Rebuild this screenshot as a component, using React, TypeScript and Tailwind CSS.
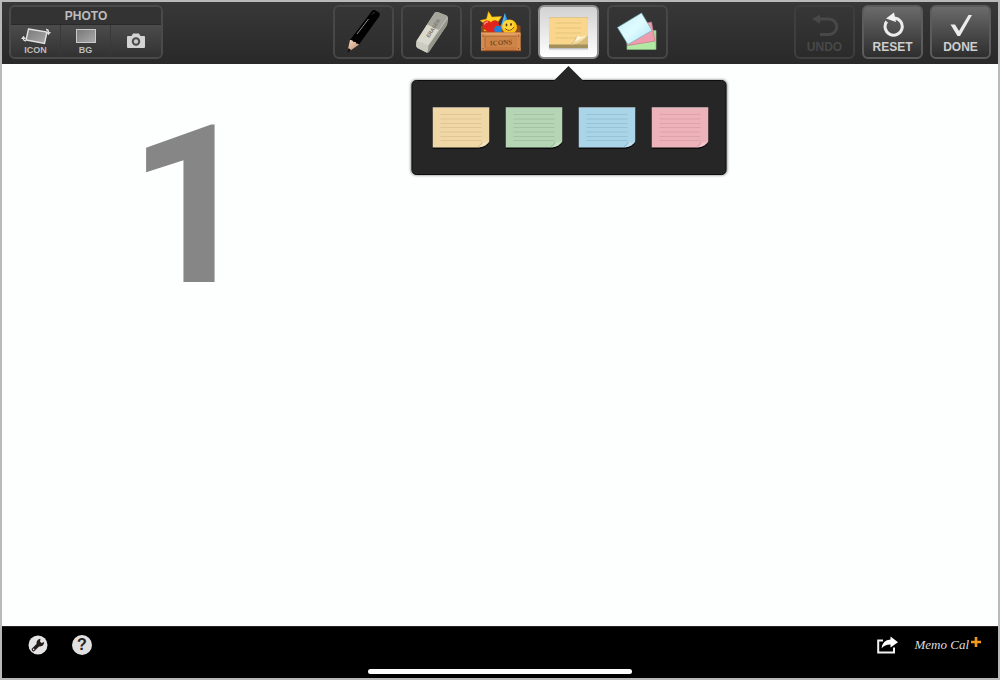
import React, { useState } from 'react';
import clsx from 'clsx';

const NOTE_COLORS = [
  { name: 'Yellow', fill: '#efd7a6', fold: '#f3e6cb', shade: '#c9ad78' },
  { name: 'Green', fill: '#b5d5b4', fold: '#cfe5cf', shade: '#86ab88' },
  { name: 'Blue', fill: '#aad4e7', fold: '#cae5f1', shade: '#7ba7bf' },
  { name: 'Pink', fill: '#edb3bb', fold: '#f6d0d5', shade: '#c98a94' },
];

function PencilIcon() {
  return (
    <svg viewBox="0 0 57 50" className="w-[57px] h-[50px]" aria-hidden="true">
      <defs>
        <linearGradient id="wood" x1="0" y1="0" x2="1" y2="1">
          <stop offset="0" stopColor="#f6d9c0" />
          <stop offset="1" stopColor="#c08a6c" />
        </linearGradient>
      </defs>
      <path d="M36.500 4.500 Q38 2.500 40 3.200 L44 5.500 Q45.500 7 44.500 9 L24 37.500 L15 33 Z" fill="#000" />
      <path d="M15 33 Q17.500 32.500 18.500 35 Q21 34 21.500 37 Q23 36.500 24 37.500 L15.500 43.500 L13 42 Z" fill="url(#wood)" />
      <path d="M13.500 41 L16 43 L12.500 46 Z" fill="#111" />
      <path d="M22 27 L33.500 12" stroke="#8b8b8b" strokeWidth="1" />
      <path d="M37 7.500 L39.500 5" stroke="#444" strokeWidth="1" />
    </svg>
  );
}

function EraserIcon() {
  return (
    <svg viewBox="0 0 57 50" className="w-[57px] h-[50px]" aria-hidden="true">
      <path d="M31.500 6 Q32.500 4.500 34.500 5 L43.500 8.500 Q45.200 9.500 45 11.500 L44 18 L26.500 44 Q25.500 46 23.500 45.500 L14.500 41 Q13 40 13.200 38 L13.500 34 Z" fill="#c4c4b9" />
      <path d="M31.500 6 Q32.500 4.500 34.500 5 L43.500 8.500 Q45 9.500 43.500 11.500 L35.500 23 L24 17.500 Z" fill="#a5a59b" />
      <path d="M24 17.500 L35.500 23 L25.500 38.500 L13.500 34 Z" fill="#d9d9ce" />
      <path d="M13.500 34 L25.500 38.500 L24.500 45.500 Q24 45.700 23.500 45.500 L14.500 41 Q13 40 13.200 38 Z" fill="#cbcbc0" />
      <path d="M25.500 38.500 L45 11 L44 18 L26.500 44 Q25.500 45.500 24.500 45.500 Z" fill="#95958b" />
      <text
        x="26"
        y="31"
        transform="rotate(-57 26 31)"
        fontFamily="Liberation Sans"
        fontWeight="bold"
        fontSize="5"
        fill="#77776e"
      >
        ERASER
      </text>
    </svg>
  );
}

function CrateIcon() {
  return (
    <svg viewBox="0 0 57 50" className="w-[57px] h-[50px]" aria-hidden="true">
      <path d="M9 19 L12 18 L46 18 L48.500 19 L48.500 26 L9 26 Z" fill="#8a4a20" />
      <path d="M33 6 L38.500 22 L28 22 Z" fill="#2b8fe0" />
      <path d="M33 6 L34 22 L28 22 Z" fill="#55b3f3" />
      <path d="M16.500 4.500 L20 10 L29.500 9.500 L25 16.500 L28 24 L12 24 L13 17 L8 13.500 L14.500 12 Z" fill="#ffd424" stroke="#e09a10" strokeWidth="0.500" />
      <path d="M19 15.500 C21 12 27 12.500 27 17.500 C27 21 24 24 21 26.500 C15 25 10.500 22 10.500 18 C10.500 13 17 12 19 15.500 Z" fill="#e0251b" />
      <path d="M12.500 17 Q13 15 15.500 15" stroke="#ff8d7c" strokeWidth="1.500" fill="none" strokeLinecap="round" />
      <circle cx="26" cy="22.500" r="3.800" fill="#1f7ddb" />
      <circle cx="37.500" cy="20" r="7.500" fill="#fdbf12" />
      <circle cx="36.500" cy="18.500" r="5.500" fill="#ffd63b" />
      <ellipse cx="34.500" cy="18" rx="0.900" ry="1.400" fill="#5e3508" />
      <ellipse cx="39" cy="17.500" rx="0.900" ry="1.400" fill="#5e3508" />
      <path d="M33 21.500 Q38 26 42 20" stroke="#8a4c0a" strokeWidth="1" fill="none" />
      <rect x="9" y="25.500" width="39.500" height="18" fill="#b96b34" />
      <rect x="9" y="25.500" width="39.500" height="3.500" fill="#e3a063" />
      <rect x="9" y="40.500" width="39.500" height="3.500" fill="#c97c41" />
      <rect x="9" y="27" width="4" height="17" fill="#d68b4e" />
      <rect x="44.500" y="27" width="4" height="17" fill="#d68b4e" />
      <rect x="13" y="29" width="31.500" height="11.500" fill="#cd8548" />
      <path d="M13 40.500 V29 H44.500" stroke="#9c5a2b" strokeWidth="0.700" fill="none" />
      <path d="M9 44 H48.500" stroke="#6f3711" strokeWidth="1" />
      <circle cx="11" cy="29" r="0.600" fill="#6b3511" />
      <circle cx="46.500" cy="29" r="0.600" fill="#6b3511" />
      <circle cx="11" cy="41.500" r="0.600" fill="#6b3511" />
      <circle cx="46.500" cy="41.500" r="0.600" fill="#6b3511" />
      <text
        x="18"
        y="38"
        transform="rotate(-3 28 36)"
        fontFamily="Liberation Serif"
        fontWeight="bold"
        fontSize="7"
        fill="#7b4721"
      >
        ICONS
      </text>
    </svg>
  );
}

function StickyIcon() {
  return (
    <svg viewBox="0 0 57 50" className="w-[57px] h-[50px]" aria-hidden="true">
      <rect x="9" y="38" width="39" height="4.500" rx="1" fill="#8d8d8d" opacity="0.500" />
      <rect x="9" y="10.500" width="39" height="30.500" rx="1" fill="#a3905c" />
      <path d="M10.500 10.500 H46.500 Q48 10.500 48 12 V28 Q42 36.500 31 37.500 H9 V12 Q9 10.500 10.500 10.500 Z" fill="#f9d68b" />
      <path d="M15.500 16 H41 M15.500 21 H41 M15.500 26 H41 M15.500 31 H35" stroke="#e6c47c" strokeWidth="1" />
      <path d="M31 37.500 Q36 34.500 36.500 28.500 Q40 31 48 28 L48 37.500 Z" fill="#d9bb78" />
      <path d="M31 37.500 Q36 34.500 36.500 28.500 Q40 31 48 28 Q41 37 31 37.500 Z" fill="#eed9a4" />
      <path d="M36.500 28.500 Q40 31 48 28 Q40 33 33.500 35 Q36.500 32 36.500 28.500 Z" fill="#fff3d0" />
      <path d="M31 37 Q36 34 36.500 28.500" stroke="#d3b269" strokeWidth="0.700" fill="none" />
    </svg>
  );
}

function CardsIcon() {
  return (
    <svg viewBox="0 0 57 50" className="w-[57px] h-[50px]" aria-hidden="true">
      <defs>
        <linearGradient id="sky" x1="0" y1="0" x2="1" y2="1">
          <stop offset="0" stopColor="#c9f1fa" />
          <stop offset="0.500" stopColor="#dffbff" />
          <stop offset="1" stopColor="#a8e2f1" />
        </linearGradient>
      </defs>
      <path d="M18 23.500 H47 V42.500 H18 Z" fill="#b0e8a4" stroke="#83b97b" strokeWidth="0.700" />
      <path d="M38 16 L42.500 15 L46 34 L18.500 38.500 L16 26 Z" fill="#ef9dae" stroke="#c67486" strokeWidth="0.700" />
      <path d="M32.500 6 L43 23.500 L19 37.500 L8.500 20.500 Z" fill="url(#sky)" stroke="#79aab7" strokeWidth="0.700" />
    </svg>
  );
}

function RotatePhotoIcon() {
  return (
    <svg viewBox="0 0 30 18" className="w-[30px] h-[18px]" aria-hidden="true">
      <defs>
        <linearGradient id="print" x1="0" y1="0" x2="1" y2="1">
          <stop offset="0" stopColor="#777" />
          <stop offset="1" stopColor="#aaa" />
        </linearGradient>
      </defs>
      <path d="M7.500 2 L26 5 L23.500 16.500 L5 13 Z" fill="url(#print)" stroke="#e2e2e2" strokeWidth="1.400" />
      <path d="M2.500 10 V12.500 Q2.500 13.500 5 14" stroke="#ddd" strokeWidth="1.300" fill="none" />
      <path d="M2.500 8.800 L5 12 H0 Z" fill="#ddd" />
      <path d="M25 2.500 Q27.500 2.500 27.500 5" stroke="#ddd" strokeWidth="1.300" fill="none" />
      <path d="M27.500 8.200 L30 5 H25 Z" fill="#ddd" />
    </svg>
  );
}

function BackgroundIcon() {
  return (
    <svg viewBox="0 0 30 18" className="w-[30px] h-[18px]" aria-hidden="true">
      <rect x="5.500" y="2.500" width="19" height="13" fill="url(#print)" stroke="#c9c9c9" strokeWidth="1" />
    </svg>
  );
}

function CameraIcon() {
  return (
    <svg viewBox="0 0 20 18" className="w-[20px] h-[18px]" aria-hidden="true">
      <path
        d="M2 4 H5.500 L7 1.500 H13 L14.500 4 H18 Q19 4 19 5 V15 Q19 16 18 16 H2 Q1 16 1 15 V5 Q1 4 2 4 Z"
        fill="#d3d3d3"
      />
      <circle cx="10" cy="9.500" r="4.200" fill="#4a4a4a" />
      <circle cx="10" cy="9.500" r="2.200" fill="#c9c9c9" />
    </svg>
  );
}

function UndoIcon() {
  return (
    <svg viewBox="0 0 28 26" className="w-[28px] h-[26px]" aria-hidden="true">
      <path d="M8 8 H18 A7.700 7.700 0 0 1 18 23.500 H9" stroke="currentColor" strokeWidth="3" fill="none" />
      <path d="M1 8 L9 3.500 V12.500 Z" fill="currentColor" />
    </svg>
  );
}

function ResetIcon() {
  return (
    <svg viewBox="0 0 28 26" className="w-[28px] h-[26px]" aria-hidden="true">
      <path d="M7.700 10.500 A8.600 8.600 0 1 0 15.500 7" stroke="#ececec" strokeWidth="3" fill="none" />
      <path d="M7 7.500 L15 1.500 L17 11 Z" fill="#f2f2f2" />
    </svg>
  );
}

function CheckIcon() {
  return (
    <svg viewBox="0 0 28 26" className="w-[28px] h-[26px]" aria-hidden="true">
      <path d="M3.500 13.500 H8 L12 20 L21.500 4 H25 L13 25 H10.500 Z" fill="#ececec" />
    </svg>
  );
}

function WrenchIcon() {
  return (
    <svg viewBox="0 0 20 20" className="w-5 h-5" aria-hidden="true">
      <circle cx="10" cy="10" r="9.500" fill="#e4e4e4" />
      <path d="M5.500 14.500 L11 9" stroke="#241a18" strokeWidth="3.600" strokeLinecap="round" />
      <path
        d="M8.500 8 Q8.500 4.500 12.500 3.800 L12 6.500 L13.500 8 L16.200 7 Q16 11 12 11.500 Q9 11.500 8.500 8 Z"
        fill="#241a18"
      />
      <circle cx="5.600" cy="14.400" r="0.800" fill="#e4e4e4" />
    </svg>
  );
}

function ShareIcon() {
  return (
    <svg viewBox="0 0 21 18" className="w-[21px] h-[18px]" aria-hidden="true">
      <path d="M6 4.500 H1.200 V16.500 H17 V11.500" stroke="#f2f2f2" strokeWidth="2" fill="none" />
      <path d="M13.500 0.500 L21 6.200 L13.500 11.500 V8.500 Q7.500 8.500 4.500 12.500 Q5.500 4 13.500 3.500 Z" fill="#fff" />
    </svg>
  );
}

function NotePaper({ fill, fold, shade }: { fill: string; fold: string; shade: string }) {
  return (
    <svg viewBox="0 0 57 42" className="w-[57px] h-[42px]" aria-hidden="true">
      <path d="M0 6 H57 V35 Q54 41 46 42 H0 Z" fill="#0c0c0c" />
      <path d="M0 0.500 H57 V34 Q54 39.500 46 40.500 H0 Z" fill={fill} />
      <path d="M0 0.500 H57" stroke="#fff" strokeOpacity="0.300" />
      <path
        d="M8 7.500 H49 M8 12 H49 M8 16.500 H49 M8 20.500 H49 M8 25 H49 M8 29.500 H49 M8 33.500 H49"
        stroke={shade}
        strokeOpacity="0.400"
      />
      <path d="M46 40.500 Q49 39 50 35 Q53 36.500 57 34 Q54 39.500 46 40.500 Z" fill={fold} fillOpacity="0.700" />
      <path d="M45 40 Q48.500 38.500 50 35" stroke={shade} strokeOpacity="0.700" fill="none" />
    </svg>
  );
}

const TOOLS = [
  { id: 'pencil', label: 'Pencil', icon: PencilIcon },
  { id: 'eraser', label: 'Eraser', icon: EraserIcon },
  { id: 'icons', label: 'Icons', icon: CrateIcon },
  { id: 'notes', label: 'Sticky notes', icon: StickyIcon },
  { id: 'cards', label: 'Cards', icon: CardsIcon },
];

const ACTIONS = [
  { label: 'UNDO', icon: UndoIcon, disabled: true },
  { label: 'RESET', icon: ResetIcon, disabled: false },
  { label: 'DONE', icon: CheckIcon, disabled: false },
];

function NotePicker() {
  return (
    <div className="absolute top-[75px] left-1/2 -translate-x-1/2 z-10 w-[315px] rounded-[5px] bg-[#262626] border border-[#0d0d0d] shadow-[0_0_3px_rgba(0,0,0,0.6)] pt-[26px] pb-[25px] pl-5">
      <svg viewBox="0 0 30 15" className="absolute -top-[15px] left-1/2 -translate-x-1/2 w-[30px] h-[15px]" aria-hidden="true">
        <path d="M0 15 L15 0 L30 15 Z" fill="#262626" />
      </svg>
      <div className="flex gap-4">
        {NOTE_COLORS.map(({ name, ...colors }) => (
          <button key={name} type="button" aria-label={name + ' note'}>
            <NotePaper {...colors} />
          </button>
        ))}
      </div>
    </div>
  );
}

export default function App() {
  const [tool, setTool] = useState('notes');

  return (
    <div className="min-h-screen flex flex-col border-2 border-[#b9b9b9] bg-[#fdfefe] font-['Liberation_Sans',Arial,sans-serif]">
      <header className="grid grid-cols-[1fr_auto_1fr] items-start h-[62px] pt-[3px] pl-[7px] pr-[7px] bg-linear-to-b from-[#383838] to-[#292929]">
        <div className="w-[154px] h-[54px] flex flex-col rounded-md border-2 border-[#4a4a4a] overflow-hidden font-bold text-[#bdbdbd]">
          <h2 className="h-[18px] text-center text-xs leading-[18px] bg-[#333] border-b border-[#292929]">PHOTO</h2>
          <div className="flex-1 grid grid-cols-3 bg-linear-to-b from-[#4c4c4c] to-[#323232] text-[9px] leading-[10px]">
            <button type="button" className="flex flex-col items-center pt-[2px] border-r border-[#383838]">
              <RotatePhotoIcon />
              ICON
            </button>
            <button type="button" className="flex flex-col items-center pt-[2px] border-r border-[#383838]">
              <BackgroundIcon />
              BG
            </button>
            <button type="button" aria-label="Camera" className="flex items-center justify-center">
              <CameraIcon />
            </button>
          </div>
        </div>

        <nav className="flex justify-between w-[335px]">
          {TOOLS.map(({ id, label, icon: Icon }) => (
            <div key={id} className="relative">
              <button
                type="button"
                aria-label={label}
                onClick={() => setTool(id)}
                className={clsx(
                  'w-[61px] h-[54px] flex items-center justify-center rounded-md border-2',
                  tool === id
                    ? 'border-[#8f8f8f] bg-linear-to-b from-[#d2d2d2] to-[#ffffff]'
                    : 'border-[#474747] bg-linear-to-b from-[#363636] to-[#2d2d2d]'
                )}
              >
                <Icon />
              </button>
              {id === 'notes' && tool === 'notes' && <NotePicker />}
            </div>
          ))}
        </nav>

        <div className="flex gap-[7px] justify-end">
          {ACTIONS.map(({ label, icon: Icon, disabled }) => (
            <button
              key={label}
              type="button"
              disabled={disabled}
              className={clsx(
                'w-[61px] h-[54px] flex flex-col items-center pt-1 rounded-md border-2 text-xs leading-5 font-bold',
                disabled
                  ? 'border-[#3e3e3e] text-[#484848]'
                  : 'border-[#5c5c5c] text-[#cfcfcf] bg-linear-to-b from-[#6b6b6b] to-[#2e2e2e]'
              )}
            >
              <Icon />
              {label}
            </button>
          ))}
        </div>
      </header>

      <main className="flex-1 pt-[43px] pl-[126px]">
        <p className="font-['Roboto',sans-serif] text-[221px] leading-[200px] font-bold text-[#868686]">1</p>
      </main>

      <footer className="bg-black border-t border-[#222] pb-1">
        <div className="flex items-center justify-between h-9 pl-[26px] pr-[17px]">
          <div className="flex gap-6">
            <button type="button" aria-label="Settings">
              <WrenchIcon />
            </button>
            <button
              type="button"
              aria-label="Help"
              className="w-5 h-5 rounded-full bg-[#e0e0e0] text-[#222] text-base leading-5 font-bold"
            >
              ?
            </button>
          </div>
          <div className="flex items-center gap-4">
            <button type="button" aria-label="Share">
              <ShareIcon />
            </button>
            <a href="#about" className="flex items-start text-[#ddd]">
              <span className="font-['Liberation_Serif',serif] italic text-[13px] leading-5">Memo Cal</span>
              <svg viewBox="0 0 10 10" className="w-[10px] h-[10px] mt-[2px] ml-[2px]" aria-hidden="true">
                <path d="M5 0 V10 M0 5 H10" stroke="#f39a1e" strokeWidth="2.600" />
              </svg>
            </a>
          </div>
        </div>
        <div className="mx-auto mt-[6px] h-[5px] w-[264px] rounded-full bg-white" />
      </footer>
    </div>
  );
}
